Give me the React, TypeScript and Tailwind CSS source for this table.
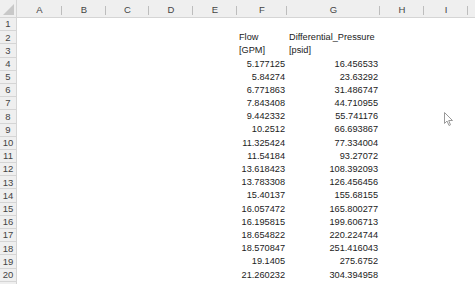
import React from 'react';

const cols = [
  { name: 'A', w: 45 },
  { name: 'B', w: 44 },
  { name: 'C', w: 43 },
  { name: 'D', w: 44 },
  { name: 'E', w: 44 },
  { name: 'F', w: 50 },
  { name: 'G', w: 93 },
  { name: 'H', w: 44 },
  { name: 'I', w: 44 },
  { name: '', w: 40 },
];

const data: [string, string][] = [
  ['5.177125', '16.456533'],
  ['5.84274', '23.63292'],
  ['6.771863', '31.486747'],
  ['7.843408', '44.710955'],
  ['9.442332', '55.741176'],
  ['10.2512', '66.693867'],
  ['11.325424', '77.334004'],
  ['11.54184', '93.27072'],
  ['13.618423', '108.392093'],
  ['13.783308', '126.456456'],
  ['15.40137', '155.68155'],
  ['16.057472', '165.800277'],
  ['16.195815', '199.606713'],
  ['18.654822', '220.224744'],
  ['18.570847', '251.416043'],
  ['19.1405', '275.6752'],
  ['21.260232', '304.394958'],
];

function cellText(row: number, col: string): { text: string; right?: boolean } | null {
  if (row === 2 && col === 'F') return { text: 'Flow' };
  if (row === 2 && col === 'G') return { text: 'Differential_Pressure' };
  if (row === 3 && col === 'F') return { text: '[GPM]' };
  if (row === 3 && col === 'G') return { text: '[psid]' };
  if (row >= 4 && row <= 20) {
    const d = data[row - 4];
    if (col === 'F') return { text: d[0], right: true };
    if (col === 'G') return { text: d[1], right: true };
  }
  return null;
}

export default function App() {
  const rows = Array.from({ length: 20 }, (_, i) => i + 1);
  return (
    <div
      className="relative w-[475px] h-[284px] overflow-hidden bg-white text-[#222]"
      style={{ fontFamily: '"Liberation Sans", Arial, sans-serif' }}
    >
      {/* column headers */}
      <div className="flex h-[18px] bg-[#efefef] border-b border-[#d5d5d5]">
        <div className="relative w-[17px] shrink-0 border-r border-[#d5d5d5]">
          <svg className="absolute right-[2px] bottom-[2px]" width="11" height="11" viewBox="0 0 11 11">
            <polygon points="11,0 11,11 0,11" fill="#c8c8c8" />
          </svg>
        </div>
        {cols.map((c, i) => (
          <div
            key={i}
            className="relative shrink-0 flex items-center justify-center pt-[3px] text-[9.5px] text-[#444]"
            style={{ width: c.w }}
          >
            {c.name}
            <span className="absolute right-0 top-[6px] h-[9px] w-px bg-[#bdbdbd]" />
          </div>
        ))}
      </div>
      {/* rows */}
      {rows.map((r) => (
        <div key={r} className="flex h-[13.2px]">
          <div className="w-[17px] shrink-0 bg-[#efefef] border-r border-b border-[#d5d5d5] text-[9.5px] text-[#444] flex items-center justify-center leading-none">
            {r}
          </div>
          {cols.map((c, i) => {
            const t = cellText(r, c.name);
            return (
              <div
                key={i}
                className={`shrink-0 flex items-center text-[9.2px] leading-none whitespace-nowrap px-[2px] ${
                  t?.right ? 'justify-end' : 'justify-start'
                }`}
                style={{ width: c.w }}
              >
                {t ? t.text : ''}
              </div>
            );
          })}
        </div>
      ))}
      <div className="flex h-[4px]">
        <div className="w-[17px] shrink-0 bg-[#efefef] border-r border-[#d5d5d5]" />
      </div>
      {/* mouse pointer */}
      <svg className="absolute left-[444px] top-[112px]" width="10" height="15" viewBox="0 0 10 15">
        <path
          d="M0.5 0.5 L0.5 11.5 L3 9 L5 13.5 L6.5 12.8 L4.7 8.5 L8.5 8.5 Z"
          fill="white"
          stroke="#9a9a9a"
          strokeWidth="1"
          strokeLinejoin="round"
        />
      </svg>
    </div>
  );
}
